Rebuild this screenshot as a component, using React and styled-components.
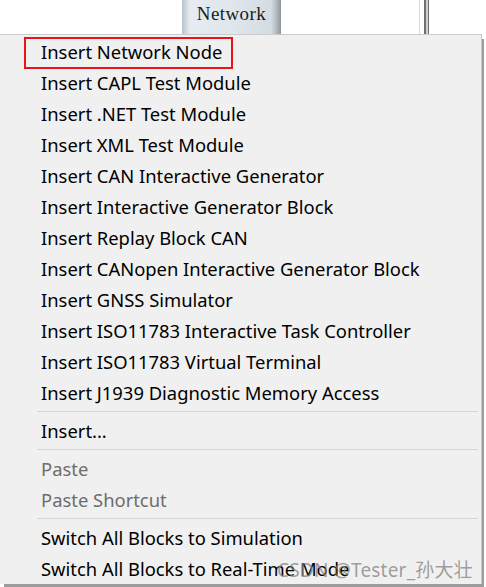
import React from 'react';
import styled, { createGlobalStyle } from 'styled-components';

const Global = createGlobalStyle`
    html, body {
        margin: 0;
        padding: 0;
        background: #ffffff;
        overflow: hidden;
    }
`;

const Page = styled.div`
    position: relative;
    width: 486px;
    height: 587px;
    background: #ffffff;
    font-family: "Noto Sans", "Noto Sans CJK SC", sans-serif;
`;

const TopBar = styled.div`
    height: 34px;
    display: flex;
    align-items: stretch;
`;

const Tab = styled.div`
    margin-left: 182px;
    width: 99px;
    box-sizing: border-box;
    background: linear-gradient(to right, #b8c2cc 0%, #e6ecf1 8%, #dfe6ec 50%, #d4dce3 90%, #a7adb3 97%, #8e949a 100%);
    font-family: "Liberation Serif", "DejaVu Serif", serif;
    font-size: 19px;
    color: #1a1a1a;
    display: flex;
    justify-content: center;
    padding-top: 3px;
    letter-spacing: 0.4px;
`;

const Rails = styled.div`
    margin-left: 138px;
    display: flex;
`;

const Rail = styled.div`
    width: ${({ w }) => w}px;
    background: ${({ c }) => c};
`;

const Menu = styled.div`
    width: 482px;
    box-sizing: border-box;
    border-top: 1px solid #cccccc;
    border-right: 1px solid #c8c8c8;
    background: #f0f0f0;
    padding-top: 1px;
    box-shadow: 3px 4px 0 -1px #9c9c9c;
`;

const Item = styled.div`
    position: relative;
    height: 31px;
    display: flex;
    align-items: center;
    padding-left: 41px;
    font-size: 18.4px;
    color: ${({ disabled }) => disabled ? "#6d6d6d" : "#000000"};
    white-space: nowrap;
`;

const Highlight = styled.div`
    position: absolute;
    left: 24px;
    top: 1px;
    width: 209px;
    height: 32px;
    box-sizing: border-box;
    border: 2px solid #e8141c;
`;

const Separator = styled.div`
    height: 7px;
    display: flex;
    align-items: center;
    padding-left: 37px;
    padding-right: 3px;

    &::after {
        content: "";
        flex: 1;
        height: 1px;
        background: #d6d6d6;
    }
`;

const Watermark = styled.div`
    position: absolute;
    left: 277px;
    top: 555px;
    font-size: 19px;
    color: rgba(130, 130, 130, 0.75);
    white-space: nowrap;
    letter-spacing: 0.2px;
`;

const groups = [
    [
        { label: "Insert Network Node", boxed: true },
        { label: "Insert CAPL Test Module" },
        { label: "Insert .NET Test Module" },
        { label: "Insert XML Test Module" },
        { label: "Insert CAN Interactive Generator" },
        { label: "Insert Interactive Generator Block" },
        { label: "Insert Replay Block CAN" },
        { label: "Insert CANopen Interactive Generator Block" },
        { label: "Insert GNSS Simulator" },
        { label: "Insert ISO11783 Interactive Task Controller" },
        { label: "Insert ISO11783 Virtual Terminal" },
        { label: "Insert J1939 Diagnostic Memory Access" },
    ],
    [{ label: "Insert..." }],
    [
        { label: "Paste", disabled: true },
        { label: "Paste Shortcut", disabled: true },
    ],
    [
        { label: "Switch All Blocks to Simulation" },
        { label: "Switch All Blocks to Real-Time Mode" },
    ],
];

const App = () => {
    return (
        <Page>
            <Global />
            <TopBar>
                <Tab>Network</Tab>
                <Rails>
                    <Rail w={1} c="#d9d9d9" />
                    <Rail w={4} c="#ffffff" />
                    <Rail w={2} c="#6f6f6f" />
                    <Rail w={2} c="#cfcfcf" />
                    <Rail w={1} c="#6f6f6f" />
                </Rails>
            </TopBar>
            <Menu>
                {groups.map((group, gi) => (
                    <React.Fragment key={gi}>
                        {gi > 0 && <Separator />}
                        {group.map((item) => (
                            <Item key={item.label} disabled={item.disabled}>
                                {item.boxed && <Highlight />}
                                {item.label}
                            </Item>
                        ))}
                    </React.Fragment>
                ))}
            </Menu>
            <Watermark>CSDN @Tester_孙大壮</Watermark>
        </Page>
    );
};

export default App;
